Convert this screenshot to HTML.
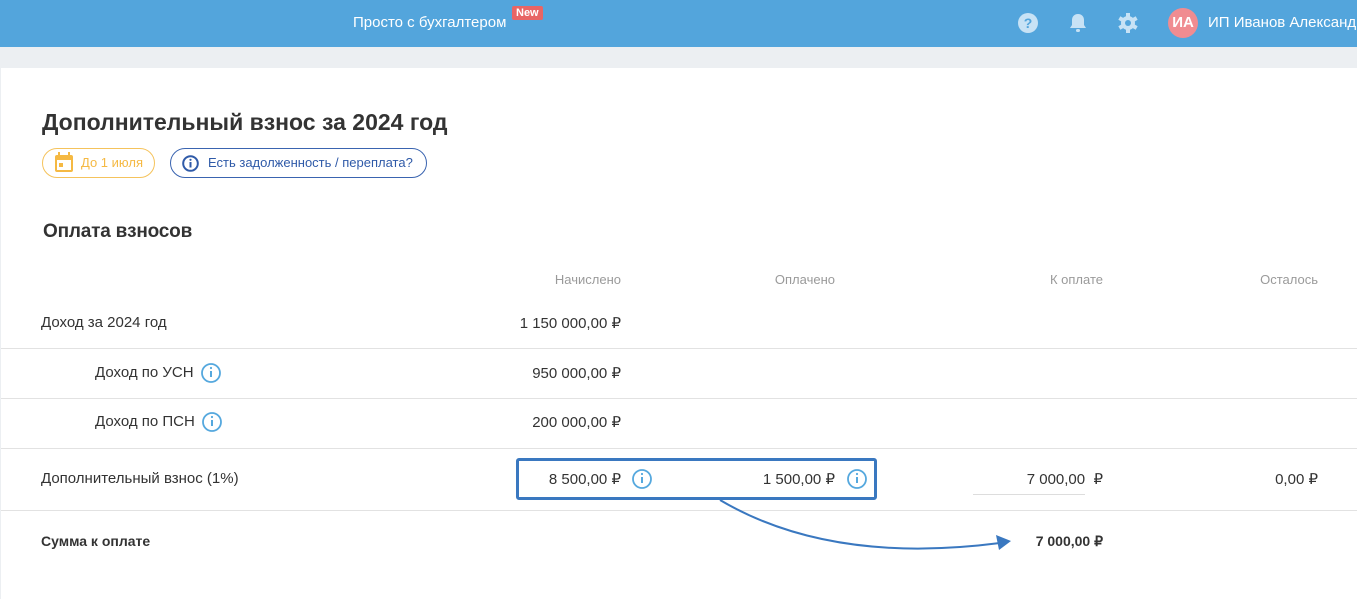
<!DOCTYPE html>
<html><head><meta charset="utf-8"><style>
*{margin:0;padding:0;box-sizing:border-box}
body{width:1357px;height:599px;overflow:hidden;background:#eceff2;font-family:"Liberation Sans",sans-serif;color:#333;position:relative}
.hdr{position:absolute;left:0;top:0;width:1357px;height:47px;background:#53a5dc}
.a{position:absolute;white-space:nowrap}
.card{position:absolute;left:1px;top:68px;width:1356px;height:531px;background:#fff}
.line{position:absolute;left:1px;width:1356px;height:1px;background:#e2e2e2}
.r{text-align:right}
.f14{font-size:15px}
.g{color:#9a9a9a;font-size:13px}
</style></head><body>
<div class="hdr"></div>
<div class="a" style="left:353px;top:14px;color:#fff;font-size:15px">Просто с бухгалтером</div>
<div class="a" style="left:512px;top:6px;background:#e86565;color:#fff;font-size:11px;font-weight:bold;padding:1px 4px;border-radius:2px">New</div>
<svg class="a" style="left:1017px;top:12px" width="22" height="22" viewBox="0 0 22 22"><circle cx="11" cy="11" r="10" fill="#c7e2f5"/><text x="11" y="16" font-size="14" font-weight="bold" fill="#53a5dc" text-anchor="middle" font-family="Liberation Sans">?</text></svg>
<svg class="a" style="left:1068px;top:12px" width="20" height="22" viewBox="0 0 20 22"><path d="M10 2c-4 0-6 3-6 6v5l-2 3h16l-2-3V8c0-3-2-6-6-6z" fill="#c7e2f5"/><rect x="8" y="17" width="4" height="3" rx="1.5" fill="#c7e2f5"/></svg>
<svg class="a" style="left:1117px;top:12px" width="22" height="22" viewBox="0 0 22 22"><g fill="#c7e2f5"><circle cx="11" cy="11" r="7"/><g id="t"><rect x="9" y="1" width="4" height="5"/><rect x="9" y="16" width="4" height="5"/></g><use href="#t" transform="rotate(60 11 11)"/><use href="#t" transform="rotate(120 11 11)"/></g><circle cx="11" cy="11" r="3" fill="#53a5dc"/></svg>
<div class="a" style="left:1168px;top:8px;width:30px;height:30px;border-radius:50%;background:#f08c91;color:#fff;font-weight:bold;font-size:15px;text-align:center;line-height:30px">ИА</div>
<div class="a" style="left:1208px;top:14px;color:#fff;font-size:15px">ИП Иванов Александр</div>
<div class="card"></div>
<div class="a" style="left:42px;top:109px;font-size:23px;font-weight:bold;color:#333">Дополнительный взнос за 2024 год</div>
<div class="a" style="left:42px;top:148px;width:113px;height:30px;border:1px solid #f5c35c;border-radius:15px"></div>
<svg class="a" style="left:54px;top:152px" width="20" height="22" viewBox="0 0 20 22"><rect x="1" y="3" width="18" height="17" rx="2" fill="#f5b943"/><rect x="3" y="8" width="14" height="10" fill="#fff"/><rect x="5" y="11" width="4" height="4" fill="#f5b943"/><rect x="4" y="0" width="2" height="5" fill="#f5b943"/><rect x="14" y="0" width="2" height="5" fill="#f5b943"/></svg>
<div class="a" style="left:81px;top:155px;font-size:13px;color:#f5b943">До 1 июля</div>
<div class="a" style="left:170px;top:148px;width:257px;height:30px;border:1px solid #3a64b0;border-radius:15px"></div>
<svg class="a" style="left:182px;top:155px" width="17" height="17" viewBox="0 0 17 17"><circle cx="8.5" cy="8.5" r="7.3" fill="none" stroke="#2f5aa8" stroke-width="2"/><rect x="7.5" y="7" width="2" height="5.5" fill="#2f5aa8"/><circle cx="8.5" cy="4.8" r="1.1" fill="#2f5aa8"/></svg>
<div class="a" style="left:208px;top:155px;font-size:13px;color:#2f5aa8">Есть задолженность / переплата?</div>
<div class="a" style="left:43px;top:221px;font-size:19px;font-weight:bold;letter-spacing:-0.2px;color:#333">Оплата взносов</div>
<div class="a g r" style="left:421px;width:200px;top:272px">Начислено</div>
<div class="a g r" style="left:635px;width:200px;top:272px">Оплачено</div>
<div class="a g r" style="left:903px;width:200px;top:272px">К оплате</div>
<div class="a g r" style="left:1118px;width:200px;top:272px">Осталось</div>
<div class="a f14" style="left:41px;top:314px">Доход за 2024 год</div>
<div class="a f14 r" style="left:421px;width:200px;top:314px">1 150 000,00 ₽</div>
<div class="line" style="top:348px"></div>
<div class="a f14" style="left:95px;top:364px">Доход по УСН</div>
<div class="a f14 r" style="left:421px;width:200px;top:364px">950 000,00 ₽</div>
<div class="line" style="top:398px"></div>
<div class="a f14" style="left:95px;top:413px">Доход по ПСН</div>
<div class="a f14 r" style="left:421px;width:200px;top:413px">200 000,00 ₽</div>
<div class="line" style="top:448px"></div>
<div class="a f14" style="left:41px;top:470px">Дополнительный взнос (1%)</div>
<div class="a" style="left:516px;top:458px;width:361px;height:42px;border:3px solid #3a78c0;border-radius:3px"></div>
<div class="a f14 r" style="left:421px;width:200px;top:470px">8 500,00 ₽</div>
<div class="a f14 r" style="left:635px;width:200px;top:470px">1 500,00 ₽</div>
<div class="a" style="left:973px;top:494px;width:112px;height:1px;background:#ddd"></div>
<div class="a f14 r" style="left:903px;width:200px;top:470px">7 000,00 &nbsp;₽</div>
<div class="a f14 r" style="left:1118px;width:200px;top:470px">0,00 ₽</div>
<div class="line" style="top:510px"></div>
<div class="a" style="left:41px;top:533px;font-size:14px;font-weight:bold">Сумма к оплате</div>
<div class="a r" style="left:903px;width:200px;top:533px;font-size:14px;font-weight:bold">7 000,00 ₽</div>
<svg class="a" style="left:0;top:0" width="1357" height="599">
<g fill="none" stroke="#55a8de" stroke-width="1.8"><circle cx="211" cy="373" r="9"/><circle cx="212" cy="422" r="9"/><circle cx="642" cy="479" r="9"/><circle cx="857" cy="479" r="9"/></g>
<g fill="#55a8de"><rect x="210" y="371" width="2" height="6"/><circle cx="211" cy="368" r="1.1"/><rect x="211" y="420" width="2" height="6"/><circle cx="212" cy="417" r="1.1"/><rect x="641" y="477" width="2" height="6"/><circle cx="642" cy="474" r="1.1"/><rect x="856" y="477" width="2" height="6"/><circle cx="857" cy="474" r="1.1"/></g>
<path d="M720 500 Q830 565 1000 543" fill="none" stroke="#3a78c0" stroke-width="2"/>
<path d="M1011 541 L996 535 L999 550 Z" fill="#3a78c0"/>
</svg>
</body></html>
